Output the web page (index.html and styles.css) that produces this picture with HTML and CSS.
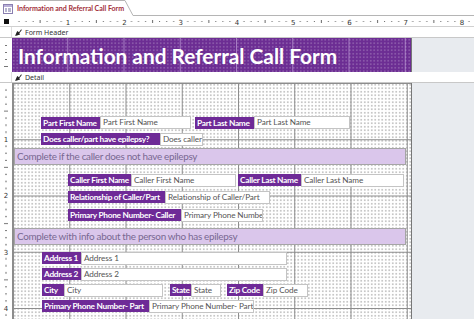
FILE: index.html
```html
<!DOCTYPE html>
<html>
<head>
<meta charset="utf-8">
<link rel="stylesheet" href="styles.css">
</head>
<body>
<div class="tabs">
  <div class="tab">
    <svg class="tab-icon" width="10" height="10" viewBox="0 0 10 10">
      <rect x="0.5" y="0.5" width="9" height="9" fill="#fff" stroke="#8a7fb0"/>
      <rect x="1" y="1" width="8" height="2" fill="#b9b0d8"/>
      <rect x="2" y="4.5" width="2" height="1" fill="#6f6aa0"/>
      <rect x="5" y="4.5" width="3" height="1" fill="#6f6aa0"/>
      <rect x="2" y="6.5" width="2" height="1" fill="#6f6aa0"/>
      <rect x="5" y="6.5" width="3" height="1" fill="#6f6aa0"/>
    </svg>
    <span class="tab-title">Information and Referral Call Form</span>
  </div>
  <svg class="tab-edge" width="10" height="16" viewBox="0 0 10 16">
    <path d="M0 0.5 L1 0.5 L9 15.5 L10 15.5" fill="none" stroke="#b5b5b5"/>
  </svg>
  <div class="tab-rest"></div>
</div>

<div class="ruler-row">
  <div class="corner"><span class="sq"></span></div>
  <svg class="hruler" width="462" height="11" viewBox="0 0 462 11">
    <defs>
      <pattern id="hp" x="0" y="0" width="56.25" height="11" patternUnits="userSpaceOnUse">
        <rect x="6.5" y="5" width="1" height="1" fill="#666"/>
        <rect x="13.5" y="5" width="1" height="1" fill="#666"/>
        <rect x="20.6" y="5" width="1" height="1" fill="#666"/>
        <rect x="27.6" y="4" width="1" height="3" fill="#666"/>
        <rect x="34.6" y="5" width="1" height="1" fill="#666"/>
        <rect x="41.7" y="5" width="1" height="1" fill="#666"/>
        <rect x="48.7" y="5" width="1" height="1" fill="#666"/>
      </pattern>
    </defs>
    <rect x="0" y="0" width="462" height="11" fill="url(#hp)"/>
    <g class="rnum">
      <text x="56" y="8.5">1</text>
      <text x="112.5" y="8.5">2</text>
      <text x="168.7" y="8.5">3</text>
      <text x="225" y="8.5">4</text>
      <text x="281.2" y="8.5">5</text>
      <text x="337.5" y="8.5">6</text>
      <text x="393.7" y="8.5">7</text>
      <text x="450" y="8.5">8</text>
    </g>
  </svg>
</div>

<div class="bar">
  <div class="bar-ruler"></div>
  <div class="bar-label">
    <svg class="bar-icon" width="7" height="7" viewBox="0 0 7 7"><path d="M0 7 L2.2 2 L4 3.2 L6.2 0.3 L6.8 0.9 L4.3 4.2 L5.2 5.5 Z" fill="#222"/></svg>
    <span>Form Header</span>
  </div>
</div>

<div class="section header-sec">
  <svg class="vruler" width="12" height="34" viewBox="0 0 12 34">
    <rect x="5" y="7" width="2" height="1" fill="#777"/>
    <rect x="5" y="14" width="2" height="1" fill="#777"/>
    <rect x="5" y="21" width="2" height="1" fill="#777"/>
    <rect x="4" y="28" width="4" height="1" fill="#777"/>
  </svg>
  <div class="canvas header-canvas">
    <h1 class="title">Information and Referral Call Form</h1>
  </div>
  <div class="outside"></div>
</div>

<div class="bar">
  <div class="bar-ruler"></div>
  <div class="bar-label">
    <svg class="bar-icon" width="7" height="7" viewBox="0 0 7 7"><path d="M0 7 L2.2 2 L4 3.2 L6.2 0.3 L6.8 0.9 L4.3 4.2 L5.2 5.5 Z" fill="#222"/></svg>
    <span>Detail</span>
  </div>
</div>

<div class="section detail-sec">
  <svg class="vruler" width="12" height="240" viewBox="0 0 12 240">
    <defs>
      <pattern id="vp" x="0" y="0" width="12" height="56.25" patternUnits="userSpaceOnUse">
        <rect x="5" y="6.5" width="2" height="1" fill="#777"/>
        <rect x="5" y="13.5" width="2" height="1" fill="#777"/>
        <rect x="5" y="20.6" width="2" height="1" fill="#777"/>
        <rect x="4" y="27.6" width="4" height="1" fill="#777"/>
        <rect x="5" y="34.6" width="2" height="1" fill="#777"/>
        <rect x="5" y="41.7" width="2" height="1" fill="#777"/>
        <rect x="5" y="48.7" width="2" height="1" fill="#777"/>
      </pattern>
    </defs>
    <rect x="0" y="0" width="12" height="240" fill="url(#vp)"/>
    <rect x="0" y="52" width="12" height="8" fill="#fff"/>
    <rect x="0" y="108" width="12" height="8" fill="#fff"/>
    <rect x="0" y="165" width="12" height="8" fill="#fff"/>
    <rect x="0" y="221" width="12" height="8" fill="#fff"/>
    <g class="rnum">
      <text x="6" y="59">1</text>
      <text x="6" y="115">2</text>
      <text x="6" y="171.5">3</text>
      <text x="6" y="228">4</text>
    </g>
  </svg>
  <div class="canvas detail-canvas">
    <div class="ctl lbl" style="left:28px;top:34px;width:59px">Part First Name</div>
    <div class="ctl txt" style="left:87px;top:33px;width:91px">Part First Name</div>
    <div class="ctl lbl" style="left:182px;top:34px;width:59px">Part Last Name</div>
    <div class="ctl txt" style="left:241px;top:33px;width:96px">Part Last Name</div>

    <div class="ctl lbl" style="left:28px;top:50px;width:119px">Does caller/part have epilepsy?</div>
    <div class="ctl txt" style="left:147px;top:50px;width:43px">Does caller</div>

    <div class="band" style="top:65px">Complete if the caller does not have epilepsy</div>

    <div class="ctl lbl" style="left:55px;top:91px;width:63px">Caller First Name</div>
    <div class="ctl txt" style="left:118px;top:91px;width:105px">Caller First Name</div>
    <div class="ctl lbl" style="left:225px;top:91px;width:63px">Caller Last Name</div>
    <div class="ctl txt" style="left:288px;top:91px;width:103px">Caller Last Name</div>

    <div class="ctl lbl" style="left:55px;top:108px;width:97px">Relationship of Caller/Part</div>
    <div class="ctl txt" style="left:152px;top:108px;width:105px">Relationship of Caller/Part</div>

    <div class="ctl lbl" style="left:55px;top:126px;width:113px">Primary Phone Number- Caller</div>
    <div class="ctl txt" style="left:168px;top:126px;width:82px">Primary Phone Number- Caller</div>

    <div class="band" style="top:145px">Complete with info about the person who has epilepsy</div>

    <div class="ctl lbl" style="left:29px;top:169px;width:39px">Address 1</div>
    <div class="ctl txt" style="left:68px;top:169px;width:206px">Address 1</div>
    <div class="ctl lbl" style="left:29px;top:185px;width:39px">Address 2</div>
    <div class="ctl txt" style="left:68px;top:185px;width:206px">Address 2</div>

    <div class="ctl lbl" style="left:29px;top:201px;width:22px">City</div>
    <div class="ctl txt" style="left:51px;top:201px;width:99px">City</div>
    <div class="ctl lbl" style="left:157px;top:201px;width:21px">State</div>
    <div class="ctl txt" style="left:178px;top:201px;width:30px">State</div>
    <div class="ctl lbl" style="left:214px;top:201px;width:36px">Zip Code</div>
    <div class="ctl txt" style="left:250px;top:201px;width:45px">Zip Code</div>

    <div class="ctl lbl" style="left:29px;top:217px;width:107px">Primary Phone Number- Part</div>
    <div class="ctl txt" style="left:136px;top:217px;width:105px">Primary Phone Number- Part</div>
  </div>
  <div class="outside"></div>
</div>
</body>
</html>
```

FILE: styles.css
```css
* { box-sizing: border-box; }
html, body { margin: 0; padding: 0; }
body {
  width: 474px;
  height: 319px;
  overflow: hidden;
  background: #fff;
  font-family: Lato, "Noto Sans", sans-serif;
}

/* tab strip */
.tabs {
  display: flex;
  height: 16px;
  background: #fff;
}
.tab {
  display: flex;
  align-items: center;
  gap: 4px;
  padding-left: 3px;
  width: 124px;
  flex: none;
  height: 16px;
  background: #fff;
  border-top: 1px solid #b5b5b5;
}
.tab-icon { flex: none; }
.tab-title {
  color: #a3303b;
  font-weight: 700;
  font-size: 7.1px;
  letter-spacing: -0.05px;
  white-space: nowrap;
}
.tab-edge { display: block; flex: none; }
.tab-rest {
  flex: 1;
  border-bottom: 1px solid #b5b5b5;
}

/* ruler */
.ruler-row {
  display: flex;
  height: 11px;
  background: #fff;
  border-bottom: 1px solid #d0d0d0;
}
.corner {
  width: 12px;
  flex: none;
  display: flex;
  align-items: center;
  justify-content: center;
}
.sq {
  width: 5px;
  height: 5px;
  background: #111;
}
.hruler { display: block; flex: none; }
.rnum text {
  font-family: "DejaVu Sans", sans-serif;
  font-size: 7px;
  fill: #333;
  text-anchor: middle;
}

/* section bars */
.bar {
  display: flex;
  height: 11px;
  background: #fff;
  border-bottom: 1px solid #c8c8c8;
}
.bar-ruler {
  width: 12px;
  flex: none;
  border-right: 1px solid #dedede;
}
.bar-label {
  display: flex;
  align-items: center;
  gap: 3px;
  padding-left: 3px;
  font-family: "Noto Sans", "DejaVu Sans", sans-serif;
  font-size: 7px;
  color: #333;
}
.bar-icon { flex: none; }

/* sections */
.section {
  display: flex;
}
.vruler {
  display: block;
  flex: none;
  background: #fff;
}
.canvas {
  position: relative;
  width: 400px;
  flex: none;
  border-right: 1px solid #777;
}
.outside {
  flex: 1;
  background: #e8ebef;
}

.header-sec { height: 34px; }
.header-canvas {
  height: 34px;
  background-color: #6c2d93;
  background-image:
    linear-gradient(to right, rgba(215, 190, 235, 0.55) 1px, transparent 1px),
    radial-gradient(circle, rgba(255, 255, 255, 0.22) 0.6px, transparent 0.8px);
  background-size: 56.25px 100%, 3.5px 3.5px;
  background-position: -1px 0, 0 0;
  padding: 5px 0 0 6px;
}
.title {
  margin: 0;
  color: #fff;
  font-family: Lato, "Noto Sans", sans-serif;
  font-weight: 700;
  font-size: 20.8px;
  line-height: 25px;
  white-space: nowrap;
}

.detail-sec { height: 240px; }
.detail-canvas {
  height: 240px;
  background-color: #fff;
  background-image:
    linear-gradient(to right, #8c8c8c 1px, transparent 1px),
    linear-gradient(to bottom, #8c8c8c 1px, transparent 1px),
    radial-gradient(circle, #a9a9a9 0.55px, transparent 0.75px);
  background-size: 56.25px 100%, 100% 56.25px, 3.5px 3.5px;
  background-position: 0 0, 0 0, 0 0;
  border-left: 1px solid #8c8c8c;
}

/* controls */
.ctl {
  position: absolute;
  white-space: nowrap;
  overflow: hidden;
  padding-left: 2px;
}
.lbl {
  height: 12px;
  line-height: 12px;
  background: #6e2a97;
  color: #fff;
  font-weight: 700;
  font-size: 8.3px;
  letter-spacing: -0.28px;
}
.txt {
  height: 13px;
  line-height: 11px;
  background: #fff;
  border: 1px solid #c4c4c4;
  color: #555;
  font-size: 8.2px;
  letter-spacing: -0.1px;
}
.band {
  position: absolute;
  left: 1px;
  width: 392px;
  height: 17px;
  background: #dac6eb;
  border: 1px solid #a5a5a5;
  color: #786891;
  font-size: 9.9px;
  letter-spacing: -0.3px;
  line-height: 15px;
  padding-left: 2px;
  white-space: nowrap;
  overflow: hidden;
}
```
